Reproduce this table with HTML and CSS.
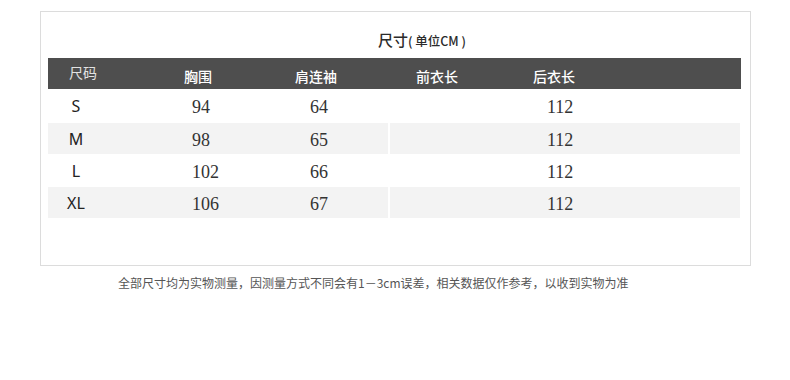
FILE: index.html
```html
<!DOCTYPE html>
<html lang="zh">
<head>
<meta charset="utf-8">
<link rel="stylesheet" href="styles.css">
</head>
<body>
<div class="card">
  <div class="title"><span class="big">尺寸</span><span class="small">( 单位CM )</span></div>
  <div class="thead">
    <div class="th first">尺码</div>
    <div class="th">胸围</div>
    <div class="th">肩连袖</div>
    <div class="th">前衣长</div>
    <div class="th">后衣长</div>
  </div>
  <div class="row r1">
    <div class="c size">S</div><div class="c num chest">94</div><div class="c num">64</div><div class="c num back">112</div>
  </div>
  <div class="row alt">
    <div class="c size">M</div><div class="c num chest">98</div><div class="c num">65</div><div class="c num back">112</div>
  </div>
  <div class="row">
    <div class="c size">L</div><div class="c num chest">102</div><div class="c num">66</div><div class="c num back">112</div>
  </div>
  <div class="row alt">
    <div class="c size">XL</div><div class="c num chest">106</div><div class="c num">67</div><div class="c num back">112</div>
  </div>
</div>
<p class="note">全部尺寸均为实物测量，因测量方式不同会有1－3cm误差，相关数据仅作参考，以收到实物为准</p>
</body>
</html>
```
FILE: styles.css
```css
html, body {
  margin: 0;
  padding: 0;
  background: #fff;
}
body {
  font-family: "Noto Sans CJK SC", "Noto Sans", sans-serif;
  color: #333;
}
.card {
  box-sizing: border-box;
  margin: 11px 0 0 40px;
  width: 711px;
  height: 255px;
  border: 1px solid #dcdcdc;
  padding: 0 9px 0 7px;
}
.title {
  box-sizing: border-box;
  height: 46px;
  padding: 18px 0 0 330px;
  line-height: 18px;
  color: #2b2b2b;
}
.title .big { font-size: 15px; font-weight: 500; }
.title .small { font-size: 12.5px; font-weight: 500; }
.thead {
  display: grid;
  grid-template-columns: 115px 111px 121px 117px 1fr;
  height: 31px;
  padding-left: 21px;
  background: #4e4e4e;
  color: #fff;
  font-size: 14px;
  line-height: 16px;
  font-weight: 500;
}
.th { padding-top: 10px; }
.th.first { padding-top: 6px; color: #e2e2e2; font-weight: 400; }
.row {
  display: grid;
  grid-template-columns: 56px 206px 78px 352px;
  height: 33px;
}
.row.r1 { height: 34px; }
.row.alt { height: 31px; }
.c {
  display: flex;
  align-items: center;
  box-sizing: border-box;
  color: #222;
}
.row.alt .c { background: #f3f3f3; }
.size {
  justify-content: center;
  font-family: "Noto Sans", "Open Sans", sans-serif;
  font-size: 16px;
}
.num {
  font-family: "Liberation Serif", "DejaVu Serif", serif;
  font-size: 18px;
  padding-top: 3px;
  color: #333;
}
.chest { padding-left: 88px; }
.back {
  padding-left: 157px;
  border-left: 2px solid #fff;
}
.note {
  margin: 9px 0 0 118px;
  font-size: 12px;
  line-height: 16px;
  color: #555;
}
```
